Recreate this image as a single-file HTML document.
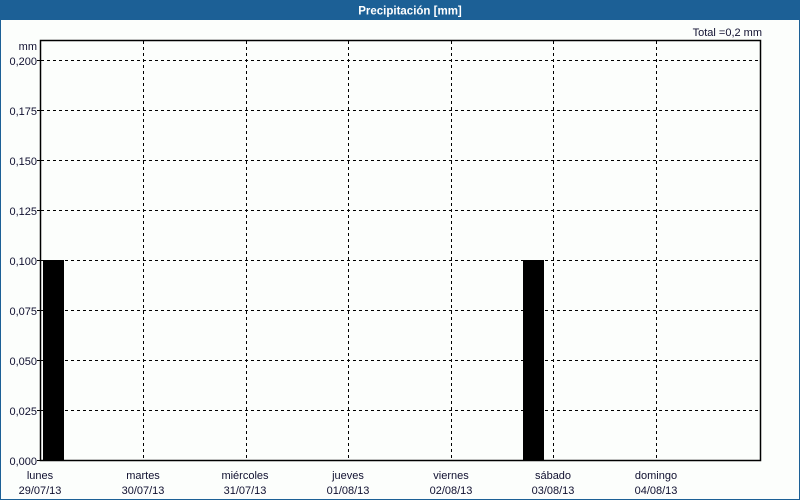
<!DOCTYPE html>
<html><head><meta charset="utf-8"><style>
html,body{margin:0;padding:0;background:#fcfefc;}
svg{display:block;}
text{font-family:"Liberation Sans","DejaVu Sans",sans-serif;font-size:11px;fill:#101030;}
</style></head><body>
<svg width="800" height="500" xmlns="http://www.w3.org/2000/svg">
<rect x="0" y="0" width="800" height="500" fill="#fcfefc"/>
<rect x="0" y="0" width="800" height="20" fill="#1c6096"/>
<rect x="0" y="0" width="800" height="500" fill="none" stroke="#1c6096" stroke-width="2"/>
<text x="410" y="14.5" text-anchor="middle" style="font-weight:bold;fill:#fff;font-size:11.5px">Precipitación [mm]</text>
<text x="762" y="36" text-anchor="end">Total =0,2 mm</text>
<text x="37" y="50" text-anchor="end">mm</text>
<g stroke="#000" stroke-dasharray="3,3" stroke-width="1">
<line x1="41" y1="60.5" x2="760" y2="60.5"/>
<line x1="41" y1="110.5" x2="760" y2="110.5"/>
<line x1="41" y1="160.5" x2="760" y2="160.5"/>
<line x1="41" y1="210.5" x2="760" y2="210.5"/>
<line x1="41" y1="260.5" x2="760" y2="260.5"/>
<line x1="41" y1="310.5" x2="760" y2="310.5"/>
<line x1="41" y1="360.5" x2="760" y2="360.5"/>
<line x1="41" y1="410.5" x2="760" y2="410.5"/>
<line x1="143.5" y1="41" x2="143.5" y2="460"/>
<line x1="246.5" y1="41" x2="246.5" y2="460"/>
<line x1="348.5" y1="41" x2="348.5" y2="460"/>
<line x1="451.5" y1="41" x2="451.5" y2="460"/>
<line x1="553.5" y1="41" x2="553.5" y2="460"/>
<line x1="656.5" y1="41" x2="656.5" y2="460"/>
</g>
<rect x="43" y="260" width="21" height="200" fill="#000"/>
<rect x="523" y="260" width="21" height="200" fill="#000"/>
<rect x="40.5" y="40.5" width="720" height="420" fill="none" stroke="#000" stroke-width="1.5"/>
<g stroke="#000">
<line x1="37" y1="60.5" x2="41" y2="60.5"/><line x1="37" y1="110.5" x2="41" y2="110.5"/>
<line x1="37" y1="160.5" x2="41" y2="160.5"/><line x1="37" y1="210.5" x2="41" y2="210.5"/>
<line x1="37" y1="260.5" x2="41" y2="260.5"/><line x1="37" y1="310.5" x2="41" y2="310.5"/>
<line x1="37" y1="360.5" x2="41" y2="360.5"/><line x1="37" y1="410.5" x2="41" y2="410.5"/>
<line x1="37" y1="460.5" x2="41" y2="460.5"/>
</g>
<g text-anchor="end">
<text x="37" y="65">0,200</text><text x="37" y="115">0,175</text>
<text x="37" y="165">0,150</text><text x="37" y="215">0,125</text>
<text x="37" y="265">0,100</text><text x="37" y="315">0,075</text>
<text x="37" y="365">0,050</text><text x="37" y="415">0,025</text>
<text x="37" y="465">0,000</text>
</g>
<g text-anchor="middle">
<text x="40" y="479">lunes</text><text x="40" y="494">29/07/13</text>
<text x="143" y="479">martes</text><text x="143" y="494">30/07/13</text>
<text x="245" y="479">miércoles</text><text x="245" y="494">31/07/13</text>
<text x="348" y="479">jueves</text><text x="348" y="494">01/08/13</text>
<text x="451" y="479">viernes</text><text x="451" y="494">02/08/13</text>
<text x="553" y="479">sábado</text><text x="553" y="494">03/08/13</text>
<text x="656" y="479">domingo</text><text x="656" y="494">04/08/13</text>
</g>
</svg>
</body></html>
